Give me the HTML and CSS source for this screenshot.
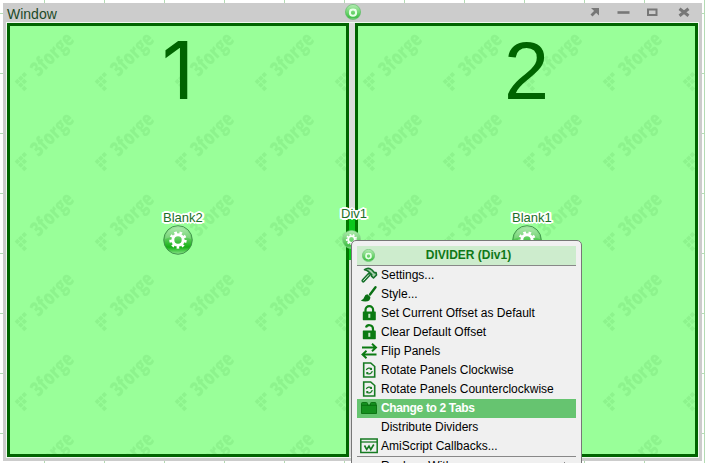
FILE: index.html
```
<!DOCTYPE html>
<html lang="en">
<head>
<meta charset="utf-8">
<title>Window</title>
<link rel="stylesheet" href="styles.css">
</head>
<body>
<svg class="defs" aria-hidden="true">
  <defs>
    <linearGradient id="ball" x1="0" y1="0" x2="0" y2="1">
      <stop offset="0" stop-color="#a4e8a4"/><stop offset=".45" stop-color="#5ccc5c"/><stop offset=".75" stop-color="#16b016"/><stop offset="1" stop-color="#8ae48a"/>
    </linearGradient>
    <linearGradient id="pale" x1="0" y1="0" x2="0" y2="1">
      <stop offset="0" stop-color="#b4ecb4"/><stop offset=".55" stop-color="#6cd46c"/><stop offset=".85" stop-color="#42be48"/><stop offset="1" stop-color="#8bdd8b"/>
    </linearGradient>
    <g id="cog">
      <circle cx="15" cy="15" r="5.2" fill="none" stroke="#fff" stroke-width="3"/>
      <circle cx="15" cy="15" r="7.4" fill="none" stroke="#fff" stroke-width="2.6" stroke-dasharray="2.6 2.566"/>
    </g>
    <symbol id="gear" viewBox="0 0 30 30">
      <circle cx="15" cy="15" r="14.3" fill="url(#ball)" stroke="#3d8f4a" stroke-width=".9"/>
      <path d="M2 14C3-1 27-1 28 14Q15 8 2 14Z" fill="#fff" opacity=".16"/>
      <use href="#cog"/>
    </symbol>
    <symbol id="gear-pale" viewBox="0 0 20 20">
      <circle cx="10" cy="10" r="9.6" fill="url(#pale)" stroke="#8ccc90" stroke-width=".6"/>
      <use href="#cog" transform="translate(-.2 -.2) scale(.68)"/>
    </symbol>
    <symbol id="gear-small" viewBox="0 0 16 16">
      <circle cx="8" cy="8" r="7.6" fill="url(#pale)" stroke="#55b860" stroke-width=".6"/>
      <circle cx="8" cy="8.700" r="3.100" fill="none" stroke="#e8ffe8" stroke-width="2"/>
      <path d="M5 5.400l1 1M11 5.400l-1 1" stroke="#e8ffe8" stroke-width="1.400"/>
    </symbol>
    <pattern id="mark" width="80" height="80" patternUnits="userSpaceOnUse">
      <g class="mark" transform="translate(14.500 65.500) rotate(-45)">
        <path d="M0-14h3.900v3.900H0zM4.900-14h3.900v3.900H4.900zM9.800-14h3.900v3.900H9.800zM0-9.100h3.900v3.900H0zM4.900-9.100h3.900v3.900H4.900zM0-4.200h3.900V-.3H0z"/>
        <text x="20" y="0" textLength="52" lengthAdjust="spacingAndGlyphs">3forge</text>
      </g>
    </pattern>
    <symbol id="page" viewBox="0 0 18 18">
      <path d="M3.700 2h7L14.700 5.500V16h-11Z" fill="none" stroke="#167a22" stroke-width="1.600"/>
      <path d="M6.300 9a3.200 3.200 0 0 1 5.200-1M12.200 10a3.200 3.200 0 0 1-5.200 2.200" fill="none" stroke="#167a22" stroke-width="1.200"/>
      <path d="M12 6.500v2.500H9.500zM6.300 13.500V11h2.500z" fill="#167a22"/>
    </symbol>
  </defs>
</svg>
<main class="window">
  <header class="titlebar">
    <span class="title">Window</span>
    <svg class="controls" width="104" height="14" viewBox="0 0 104 14">
      <g fill="none" stroke="#777">
        <path d="M1.500 10.500 7 5" stroke-width="2.800"/><path d="M1 3h8v7.500z" fill="#777" stroke="none"/>
        <path d="M27.500 7.500h12" stroke-width="2.600"/>
        <path d="M58 4.500h8.500v5.500H58z" stroke-width="2"/>
        <path d="M89.500 3.800l9 7M98.500 3.800L89.500 10.800" stroke-width="3"/>
      </g>
    </svg>
  </header>
  <div class="panels">
    <section class="panel">
      <svg class="watermark"><rect width="100%" height="100%" fill="url(#mark)"/></svg>
      <span class="number number-one">1</span>
    </section>
    <div class="divider"></div>
    <section class="panel">
      <svg class="watermark"><rect width="100%" height="100%" fill="url(#mark)"/></svg>
      <span class="number">2</span>
    </section>
  </div>
</main>

<svg class="handle handle-window"><use href="#gear-small"/></svg>
<div class="divider-active"></div>
<span class="label label-left">Blank2</span>
<svg class="handle handle-left"><use href="#gear"/></svg>
<span class="label label-right">Blank1</span>
<svg class="handle handle-right"><use href="#gear"/></svg>
<svg class="handle handle-div"><use href="#gear-pale"/></svg>
<span class="label label-div">Div1</span>

<nav class="menu">
  <div class="menu-head"><svg class="head-icon"><use href="#gear-small"/></svg>DIVIDER (Div1)</div>
  <div class="item">
    <svg class="icon" viewBox="0 0 18 18"><path d="M3.200 14.800 9.500 8" fill="none" stroke="#16702a" stroke-width="3.600" stroke-linecap="round"/><path d="M3.300 14.700 9 8.500" stroke="#e8f4e8" stroke-width="1"/><path d="M4.500 3.700Q8.500.8 12 4l2.500 2.800 1.500-.3.500 2.500-3 3-2-1.800.2-1.700L8.500 5.500Q6.500 4 4.500 3.700Z" fill="#a8cfae" stroke="#16702a" stroke-width="1.600" stroke-linejoin="round"/></svg>Settings...</div>
  <div class="item">
    <svg class="icon" viewBox="0 0 18 18"><path d="M15.500 2.200 10 9.500" stroke="#0b7015" stroke-width="2.400" stroke-linecap="round"/><path d="M7.400 9.300l3 2.600q0 4.600-5 4.600Q2.500 16.500.8 15.500q2.800-.6 3.500-3.500Q5 9.500 7.400 9.300Z" fill="#0b7015"/></svg>Style...</div>
  <div class="item">
    <svg class="icon" viewBox="0 0 18 18"><path d="M5.500 9V6a3.800 3.800 0 0 1 7.600 0v3" fill="none" stroke="#0b7a12" stroke-width="2.200"/><rect x="2.800" y="7.500" width="13" height="8.700" rx=".6" fill="#0b7a12"/><path d="M8.300 9.800h2v4h-2z" fill="#c4e8c4"/></svg>Set Current Offset as Default</div>
  <div class="item">
    <svg class="icon" viewBox="0 0 18 18"><path d="M6 4.500C7 1 13 1.500 13 6v3" fill="none" stroke="#0b7a12" stroke-width="2.200"/><rect x="2.800" y="7.500" width="13" height="8.700" rx=".6" fill="#0b7a12"/><path d="M8.300 9.800h2v4h-2z" fill="#c4e8c4"/></svg>Clear Default Offset</div>
  <div class="item">
    <svg class="icon" viewBox="0 0 18 18"><path d="M2 5.500h13M12 1.800l4 3.700-4 3.700M16.500 12.500h-13M6.500 8.800l-4 3.700 4 3.700" fill="none" stroke="#0b7a12" stroke-width="1.900"/></svg>Flip Panels</div>
  <div class="item"><svg class="icon"><use href="#page"/></svg>Rotate Panels Clockwise</div>
  <div class="item"><svg class="icon"><use href="#page"/></svg>Rotate Panels Counterclockwise</div>
  <div class="item selected">
    <svg class="icon" viewBox="0 0 18 18"><path d="M1.500 6V4.500q0-1 1-1h4q1 0 1 1V6h3V4.500q0-1 1-1h3.500q1 0 1 1V6h.5v8.500h-15z" fill="#14901e" stroke="#08700f" stroke-width=".9"/><path d="M1.500 6.300h15" stroke="#08700f"/></svg>Change to 2 Tabs</div>
  <div class="item"><span class="icon"></span>Distribute Dividers</div>
  <div class="item">
    <svg class="icon" viewBox="0 0 18 18"><path d="M.8 2h16.400v13.500H.8z" fill="none" stroke="#167a22" stroke-width="1.500"/><path d="M1 5h16" stroke="#167a22" stroke-width="1.300"/><path d="M4.500 8.500l2.200 4L9 9l1.800 3.500 3-5" fill="none" stroke="#167a22" stroke-width="1.600"/></svg>AmiScript Callbacks...</div>
  <div class="item last"><span class="icon"></span>Replace With<span class="arrow"></span></div>
</nav>
</body>
</html>
```
FILE: styles.css
```
* { box-sizing: border-box; }
body {
  margin: 0;
  padding: 3px;
  width: 705px;
  height: 463px;
  overflow: hidden;
  position: relative;
  font-family: "Liberation Sans", Arial, sans-serif;
  background-color: #fff;
  background-image: linear-gradient(90deg, #b4dcb4 1px, transparent 1px), linear-gradient(#b4dcb4 1px, transparent 1px);
  background-size: 60px 60px;
  background-position: 44px 13px;
}
svg { display: block; }
.defs { position: absolute; width: 0; height: 0; }
.mark { fill: #006400; opacity: .08; font: 800 20.5px "Open Sans", sans-serif; }
.window {
  width: 699px;
  height: 458px;
  padding: 0 3px 3px;
  background: #ccc;
}
.titlebar {
  height: 19px;
  display: flex;
  justify-content: space-between;
  padding: 2px 4px 0 1px;
}
.title { font-size: 14px; line-height: 18px; color: #1c4a28; }
.controls { margin: 0 1px 0 0; }
.panels {
  display: flex;
  height: 436px;
  border: 1px solid #effbef;
  background: #ddd;
}
.panel {
  position: relative;
  flex: 0 0 342px;
  height: 434px;
  border: 3px solid #006400;
  background: #99ff99;
  text-align: center;
}
.panel:last-child { flex-basis: 343px; }
.divider { flex: 0 0 6px; background: #ddd; }
.watermark { position: absolute; inset: 0; width: 100%; height: 100%; }
.number {
  position: relative;
  display: block;
  font-size: 81px;
  line-height: 90px;
  color: #006400;
}
.number-one { font-family: Inter, "Liberation Sans", sans-serif; font-size: 80px; line-height: 88px; }
.handle { position: absolute; }
.handle-window { left: 345px; top: 4px; width: 16px; height: 16px; }
.handle-left { left: 163px; top: 225px; width: 30px; height: 30px; }
.handle-right { left: 512px; top: 225px; width: 30px; height: 30px; }
.handle-div { left: 342px; top: 230px; width: 19px; height: 19px; }
.divider-active {
  position: absolute;
  left: 346px;
  top: 219px;
  width: 12px;
  height: 41px;
  border: solid #007800;
  border-width: 0 3px;
  background: #0ac81c;
}
.label {
  position: absolute;
  font-size: 13px;
  line-height: 15px;
  color: #1c7028;
  text-shadow: -2px 0 #fff, 2px 0 #fff, 0 -2px #fff, 0 2px #fff, -1px -1px #fff, 1px 1px #fff, -1px 1px #fff, 1px -1px #fff, -2px -1px #fff, 2px -1px #fff, -2px 1px #fff, 2px 1px #fff;
}
.label-left { left: 163px; top: 210px; }
.label-right { left: 512px; top: 210px; }
.label-div { left: 341px; top: 206px; }
.menu {
  position: absolute;
  left: 351px;
  top: 240px;
  width: 231px;
  height: 240px;
  padding: 5px;
  border: 1px solid #777;
  border-radius: 5px;
  background: #f0f0f0;
  font-size: 12px;
  color: #000;
}
.menu-head {
  position: relative;
  height: 20px;
  width: 219px;
  border-bottom: 1px solid #888;
  background: #cdeccd;
  color: #107818;
  font-weight: bold;
  line-height: 19px;
  text-align: center;
  padding-left: 4px;
}
.head-icon { position: absolute; left: 5px; top: 3px; width: 13px; height: 13px; }
.item {
  display: flex;
  align-items: center;
  width: 219px;
  height: 19px;
  padding: 0 0 2px 3px;
  white-space: nowrap;
}
.icon { width: 18px; height: 18px; margin: 0 3px 0 0; flex: none; }
.selected { background: #66c470; color: #fff; font-weight: bold; letter-spacing: -.35px; }
.last { border-top: 1px solid #888; height: 21px; }
.arrow {
  margin-left: auto;
  margin-right: 8px;
  border: 4px solid transparent;
  border-left-color: #222;
  border-right: 0;
}
```
